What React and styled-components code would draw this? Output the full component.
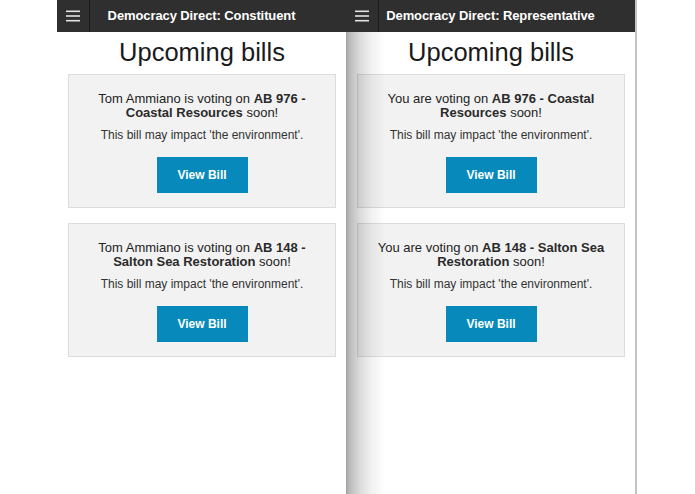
import React from "react";
import styled, { createGlobalStyle } from "styled-components";

const Global = createGlobalStyle`
  html, body { margin: 0; padding: 0; background: #fff; }
  body { font-family: "Liberation Sans", Arial, Helvetica, sans-serif; color: #222; }
  * { box-sizing: border-box; }
`;

const Stage = styled.div`
  display: flex;
  align-items: stretch;
  width: 695px;
  height: 494px;
  padding-left: 57px;
  overflow: hidden;
`;

const Phone = styled.div`
  position: relative;
  width: ${(p) => (p.$edge ? 291 : 289)}px;
  height: 494px;
  background: #fff;
  border-right: ${(p) => (p.$edge ? "2px solid #c4c4c4" : "none")};
  display: flex;
  flex-direction: column;
  ${(p) =>
    p.$shadow &&
    `
    &::after {
      content: "";
      position: absolute;
      left: 0;
      top: 32px;
      bottom: 0;
      width: 40px;
      pointer-events: none;
      background: linear-gradient(to right,
        rgba(0,0,0,0.42) 0,
        rgba(0,0,0,0.32) 1px,
        rgba(0,0,0,0.24) 6px,
        rgba(0,0,0,0.14) 14px,
        rgba(0,0,0,0.05) 26px,
        rgba(0,0,0,0) 40px);
    }
  `}
`;

const Header = styled.div`
  position: relative;
  height: 32px;
  background: #2f2f2f;
  display: flex;
  align-items: center;
  justify-content: center;
  flex-shrink: 0;
`;

const MenuCell = styled.div`
  position: absolute;
  left: 0;
  top: 0;
  width: 33px;
  height: 32px;
  border-right: 1px solid #1b1b1b;
  display: flex;
  align-items: center;
  justify-content: center;
`;

const HeaderTitle = styled.div`
  color: #fff;
  font-weight: bold;
  font-size: 13px;
  line-height: 32px;
  letter-spacing: -0.1px;
`;

const Content = styled.div`
  flex: 1;
  padding: 5px 10px 0 11px;
  display: flex;
  flex-direction: column;
  gap: 15px;
`;

const PageTitle = styled.h1`
  margin: 0 0 -8px;
  font-size: 25.5px;
  font-weight: normal;
  line-height: 30px;
  text-align: center;
  color: #1a1a1a;
`;

const Card = styled.div`
  background: #f2f2f2;
  border: 1px solid #dcdcdc;
  height: 134px;
  padding: 17px 8px 0;
  display: flex;
  flex-direction: column;
  align-items: center;
  text-align: center;
`;

const Lead = styled.p`
  margin: 0;
  font-size: 13px;
  line-height: 14px;
  color: #222;
  b { font-weight: bold; color: #2a2a2a; }
`;

const Impact = styled.p`
  margin: 8px 0 0;
  font-size: 12px;
  line-height: 14px;
  color: #333;
`;

const Button = styled.button`
  margin-top: 15px;
  width: 91px;
  height: 36px;
  border: none;
  background: #078abb;
  color: #fff;
  font-family: inherit;
  font-weight: bold;
  font-size: 12px;
  cursor: pointer;
`;

const Burger = () => (
  <svg width="14" height="12" viewBox="0 0 14 12">
    <rect x="0" y="0.5" width="14" height="1.6" fill="#e2e2e2" />
    <rect x="0" y="5.2" width="14" height="1.6" fill="#e2e2e2" />
    <rect x="0" y="9.9" width="14" height="1.6" fill="#e2e2e2" />
  </svg>
);

const bills = [
  { id: "AB 976", name: "Coastal Resources" },
  { id: "AB 148", name: "Salton Sea Restoration" },
];

function Panel({ title, who, shadow, edge }) {
  return (
    <Phone $shadow={shadow} $edge={edge}>
      <Header>
        <MenuCell>
          <Burger />
        </MenuCell>
        <HeaderTitle>{title}</HeaderTitle>
      </Header>
      <Content>
        <PageTitle>Upcoming bills</PageTitle>
        {bills.map((b) => (
          <Card key={b.id}>
            <Lead>
              {who} voting on <b>{b.id} - {b.name}</b> soon!
            </Lead>
            <Impact>This bill may impact 'the environment'.</Impact>
            <Button>View Bill</Button>
          </Card>
        ))}
      </Content>
    </Phone>
  );
}

export default function App() {
  return (
    <>
      <Global />
      <Stage>
        <Panel title="Democracy Direct: Constituent" who="Tom Ammiano is" />
        <Panel title="Democracy Direct: Representative" who="You are" shadow edge />
      </Stage>
    </>
  );
}
